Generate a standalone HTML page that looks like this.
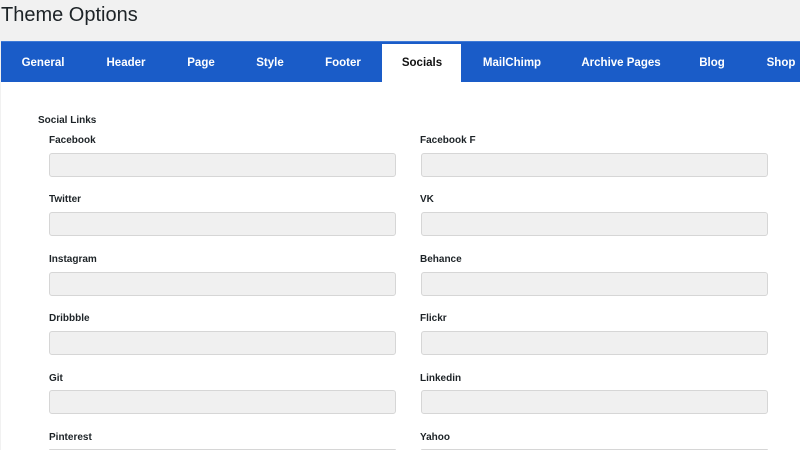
<!DOCTYPE html>
<html style="overflow:hidden;width:800px;height:450px"><head><style>
body{margin:0;width:800px;height:450px;overflow:hidden;background:#f1f1f1;font-family:"Liberation Sans",sans-serif;position:relative}
.t{position:absolute;left:1px;top:4px;font-size:20px;color:#1d2327}
.bar{position:absolute;left:1px;top:41px;width:799px;height:41px;background:#1a5cc8;border-top:1px solid #3f7ad6}
.tab{position:absolute;top:57px;font-size:11.5px;font-weight:bold;color:#fff;transform:translateX(-50%);white-space:nowrap}
.act{position:absolute;left:382px;top:44px;width:79px;height:39px;background:#fff}
.main{position:absolute;left:1px;top:82px;width:799px;height:368px;background:#fff}
.l{position:absolute;font-size:10px;font-weight:bold;color:#1d2327}
.i{position:absolute;width:345px;height:22px;background:#f0f0f0;border:1px solid #d6d6d6;border-radius:3px}
</style></head><body>
<div class="t">Theme Options</div>
<div class="bar"></div>
<div class="main"></div>
<div class="act"></div>
<div class="tab" style="left:43px">General</div>
<div class="tab" style="left:126px">Header</div>
<div class="tab" style="left:201px">Page</div>
<div class="tab" style="left:270px">Style</div>
<div class="tab" style="left:343px">Footer</div>
<div class="tab" style="left:422px;color:#111">Socials</div>
<div class="tab" style="left:512px">MailChimp</div>
<div class="tab" style="left:621px">Archive Pages</div>
<div class="tab" style="left:712px">Blog</div>
<div class="tab" style="left:781px">Shop</div>
<div class="l" style="left:38px;top:115px">Social Links</div>
<div class="l" style="left:49px;top:135px">Facebook</div><div class="l" style="left:420px;top:135px">Facebook F</div>
<div class="i" style="left:49px;top:153px"></div><div class="i" style="left:421px;top:153px"></div>
<div class="l" style="left:49px;top:194px">Twitter</div><div class="l" style="left:420px;top:194px">VK</div>
<div class="i" style="left:49px;top:212px"></div><div class="i" style="left:421px;top:212px"></div>
<div class="l" style="left:49px;top:254px">Instagram</div><div class="l" style="left:420px;top:254px">Behance</div>
<div class="i" style="left:49px;top:272px"></div><div class="i" style="left:421px;top:272px"></div>
<div class="l" style="left:49px;top:313px">Dribbble</div><div class="l" style="left:420px;top:313px">Flickr</div>
<div class="i" style="left:49px;top:331px"></div><div class="i" style="left:421px;top:331px"></div>
<div class="l" style="left:49px;top:373px">Git</div><div class="l" style="left:420px;top:373px">Linkedin</div>
<div class="i" style="left:49px;top:390px"></div><div class="i" style="left:421px;top:390px"></div>
<div class="l" style="left:49px;top:432px">Pinterest</div><div class="l" style="left:420px;top:432px">Yahoo</div>
<div class="i" style="left:49px;top:449px;height:0"></div><div class="i" style="left:421px;top:449px;height:0"></div>
</body></html>
